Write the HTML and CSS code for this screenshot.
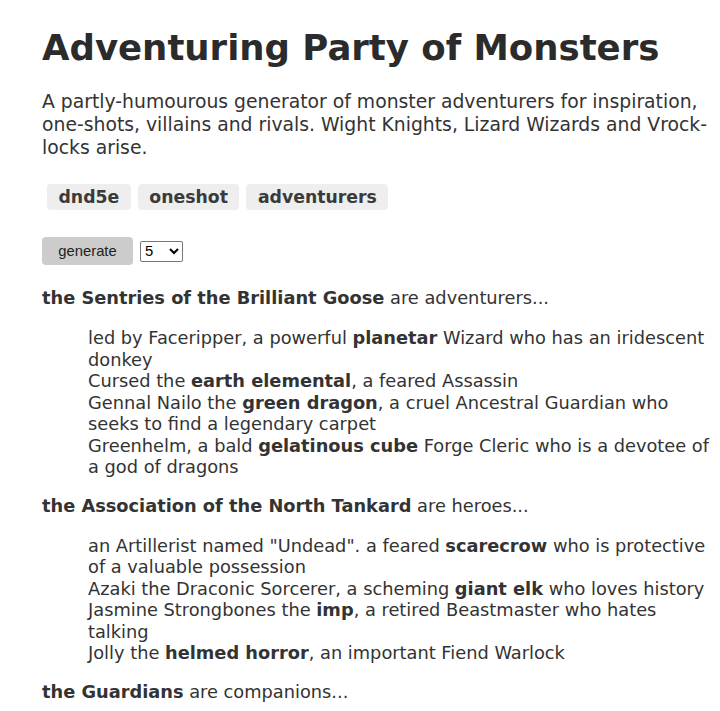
FILE: index.html
```html
<!DOCTYPE html>
<html>
<head>
<meta charset="utf-8">
<title>Adventuring Party of Monsters</title>
<link rel="stylesheet" href="styles.css">
</head>
<body>
<main class="page">
  <h1 class="title">Adventuring Party of Monsters</h1>
  <p class="intro">A partly-humourous generator of monster adventurers for inspiration, one-shots, villains and rivals. Wight Knights, Lizard Wizards and Vrock-locks arise.</p>
  <div class="tags">
    <span class="tag">dnd5e</span>
    <span class="tag">oneshot</span>
    <span class="tag">adventurers</span>
  </div>
  <div class="controls">
    <button class="gen">generate</button>
    <select class="count">
      <option>1</option><option>2</option><option>3</option><option>4</option><option selected>5</option><option>6</option>
    </select>
  </div>
  <section class="party">
    <p class="party-name"><b>the Sentries of the Brilliant Goose</b> are adventurers...</p>
    <ul class="members">
      <li>led by Faceripper, a powerful <b>planetar</b> Wizard who has an iridescent donkey</li>
      <li>Cursed the <b>earth elemental</b>, a feared Assassin</li>
      <li>Gennal Nailo the <b>green dragon</b>, a cruel Ancestral Guardian who seeks to find a legendary carpet</li>
      <li>Greenhelm, a bald <b>gelatinous cube</b> Forge Cleric who is a devotee of a god of dragons</li>
    </ul>
  </section>
  <section class="party">
    <p class="party-name"><b>the Association of the North Tankard</b> are heroes...</p>
    <ul class="members">
      <li>an Artillerist named "Undead". a feared <b>scarecrow</b> who is protective of a valuable possession</li>
      <li>Azaki the Draconic Sorcerer, a scheming <b>giant elk</b> who loves history</li>
      <li>Jasmine Strongbones the <b>imp</b>, a retired Beastmaster who hates talking</li>
      <li>Jolly the <b>helmed horror</b>, an important Fiend Warlock</li>
    </ul>
  </section>
  <section class="party">
    <p class="party-name"><b>the Guardians</b> are companions...</p>
  </section>
</main>
</body>
</html>
```
FILE: styles.css
```css
html, body {
  margin: 0;
  padding: 0;
  background: #fff;
}
body {
  font-family: "DejaVu Sans", Verdana, sans-serif;
  color: #333;
}
.page {
  padding: 22px 8px 0 42px;
}
.title {
  font-size: 35.5px;
  font-weight: bold;
  margin: 0 0 16px 0;
  line-height: 52px;
  color: #2b2b2b;
}
.intro {
  font-size: 18.8px;
  line-height: 23px;
  margin: 0 0 25px 0;
}
.tags {
  display: flex;
  gap: 7px;
  padding-left: 5px;
  margin-bottom: 27px;
}
.tag {
  background: #eee;
  border-radius: 4px;
  font-weight: bold;
  font-size: 17.3px;
  line-height: 26px;
  padding: 0 11.5px;
  color: #3a3a3a;
}
.controls {
  display: flex;
  align-items: center;
  gap: 7px;
  margin-bottom: 22px;
}
.gen {
  font-family: "Liberation Sans", Arial, sans-serif;
  font-size: 14.8px;
  background: #ccc;
  border: none;
  border-radius: 4px;
  width: 91px;
  height: 28px;
  color: #222;
}
.count {
  font-family: "Liberation Sans", Arial, sans-serif;
  font-size: 14.8px;
  width: 43px;
  height: 21px;
  border: 1px solid #767676;
  border-radius: 2px;
  background: #fff;
}
.party-name {
  font-size: 17.8px;
  line-height: 22px;
  margin: 0 0 18px 0;
}
.members {
  list-style: none;
  padding: 0 0 0 46px;
  margin: 0 0 17px 0;
  font-size: 17.8px;
  line-height: 21.5px;
}
```
